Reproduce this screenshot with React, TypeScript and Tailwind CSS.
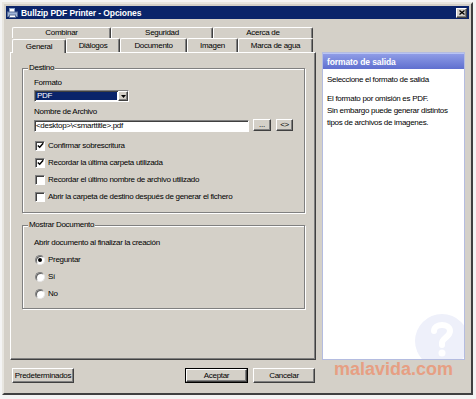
import React from 'react';

const raised =
  'border border-t-white border-l-white border-r-[#404040] border-b-[#404040] shadow-[inset_-1px_-1px_0_#808080]';
const sunken =
  'border border-t-[#808080] border-l-[#808080] border-r-white border-b-white shadow-[inset_1px_1px_0_#404040]';

function Check({ checked }: { checked?: boolean }) {
  return (
    <span className={`w-[10px] h-[10px] bg-white flex items-center justify-center ${sunken}`}>
      {checked && (
        <svg width="7" height="7" viewBox="0 0 7 7">
          <path d="M0.8 3.4 L2.7 5.3 L6.2 1.2" stroke="#000" strokeWidth="1.4" fill="none" />
        </svg>
      )}
    </span>
  );
}

function Radio({ checked }: { checked?: boolean }) {
  return (
    <span className="w-[10px] h-[10px] rounded-full bg-white border border-t-[#808080] border-l-[#808080] border-r-[#e8e8e8] border-b-[#e8e8e8] shadow-[inset_1px_1px_0_#606060] flex items-center justify-center">
      {checked && <span className="w-[4px] h-[4px] rounded-full bg-black" />}
    </span>
  );
}

function Tab({ label, w, h, selected }: { label: string; w: string; h: string; selected?: boolean }) {
  return (
    <div
      className={`${w} ${h} flex items-center justify-center border-t border-l border-t-white border-l-white border-r border-r-[#404040] shadow-[inset_-1px_0_0_#808080] rounded-t-[2px] ${
        selected ? 'relative z-10 -mb-[1px] bg-[#d4d0c8]' : ''
      }`}
    >
      {label}
    </div>
  );
}

function Group({ title, className, children }: { title: string; className: string; children: React.ReactNode }) {
  return (
    <div
      className={`ml-[11px] w-[283px] border border-[#808080] shadow-[inset_1px_1px_0_#fff,1px_1px_0_#fff] ${className}`}
    >
      <div className="-mt-[6px] ml-[5px] px-[1px] w-fit bg-[#d4d0c8] leading-[10px]">{title}</div>
      {children}
    </div>
  );
}

export default function App() {
  return (
    <div className="w-[476px] h-[399px] bg-[#f4f4f4] pl-[2px] pt-[2px] font-['Liberation_Sans',Arial,sans-serif] text-[8px] tracking-[-0.3px] leading-[10px] text-black">
      <div className="w-[471px] h-[393px] bg-[#d4d0c8] border-2 border-t-[#e8e6e0] border-l-[#e8e6e0] border-r-[#404040] border-b-[#404040] p-[2px] flex flex-col">
        {/* Title bar */}
        <div className="h-[13px] bg-[#0a246a] flex items-center pl-[1px] pr-[2px] gap-[3px]">
          <svg width="11" height="10" viewBox="0 0 11 10">
            <rect x="2.5" y="0.5" width="5" height="4" fill="#fff" stroke="#8aa0c8" />
            <rect x="0.5" y="4" width="10" height="4.5" fill="#9fb4d8" stroke="#5a6f98" />
            <rect x="2.5" y="7" width="6" height="2.5" fill="#fff" stroke="#5a6f98" />
          </svg>
          <span className="text-white font-bold text-[8.5px] tracking-[-0.1px]">Bullzip PDF Printer - Opciones</span>
          <div className="flex-1" />
          <div className={`w-[11px] h-[10px] bg-[#d4d0c8] flex items-center justify-center ${raised}`}>
            <svg width="6" height="5" viewBox="0 0 6 5">
              <path d="M0.5 0.5 L5.5 4.5 M5.5 0.5 L0.5 4.5" stroke="#000" strokeWidth="1.3" />
            </svg>
          </div>
        </div>

        <div className="px-[4px] mt-[8px]">
          <div className="flex gap-[6px]">
            {/* Left column: tabs and General page */}
            <div className="w-[306px]">
              <div className="flex pl-[2px]">
                <Tab label="Combinar" w="w-[99px]" h="h-[11px]" />
                <Tab label="Seguridad" w="w-[102px]" h="h-[11px]" />
                <Tab label="Acerca de" w="w-[100px]" h="h-[11px]" />
              </div>
              <div className="flex pl-[2px] items-end">
                <Tab label="General" w="w-[54px]" h="h-[14px]" selected />
                <Tab label="Diálogos" w="w-[54px]" h="h-[14px]" />
                <Tab label="Documento" w="w-[67px]" h="h-[14px]" />
                <Tab label="Imagen" w="w-[51px]" h="h-[14px]" />
                <Tab label="Marca de agua" w="w-[75px]" h="h-[14px]" />
              </div>
              <div className={`h-[308px] pt-[15px] ${raised}`}>
                <Group title="Destino" className="pb-[7px]">
                  <div className="pl-[11px]">
                    <div className="mt-[5px]">Formato</div>
                    <div className={`mt-[2px] w-[95px] h-[12px] bg-white flex ${sunken}`}>
                      <div className="flex-1 m-[1px] bg-[#0a246a] text-white pl-[1px] leading-[8px]">PDF</div>
                      <div className={`w-[10px] bg-[#d4d0c8] flex items-center justify-center ${raised}`}>
                        <svg width="5" height="3" viewBox="0 0 5 3">
                          <path d="M0 0 H5 L2.5 3 Z" fill="#000" />
                        </svg>
                      </div>
                    </div>
                    <div className="mt-[5px]">Nombre de Archivo</div>
                    <div className="mt-[3px] flex items-center h-[12px]">
                      <div className={`w-[215px] h-[12px] bg-white pl-[1px] leading-[10px] ${sunken}`}>
                        {'<desktop>\\<smarttitle>.pdf'}
                      </div>
                      <div className={`ml-[4px] -mt-[2px] w-[18px] h-[12px] flex items-center justify-center leading-[8px] ${raised}`}>
                        ...
                      </div>
                      <div className={`ml-[5px] -mt-[2px] w-[17px] h-[12px] flex items-center justify-center leading-[8px] ${raised}`}>
                        {'<>'}
                      </div>
                    </div>
                    <div className="mt-[5px] flex flex-col">
                      {[
                        ['Confirmar sobrescritura', true],
                        ['Recordar la última carpeta utilizada', true],
                        ['Recordar el último nombre de archivo utilizado', false],
                        ['Abrir la carpeta de destino después de generar el fichero', false],
                      ].map(([label, checked]) => (
                        <div key={label as string} className="h-[17px] flex items-center gap-[3px] pl-[1px]">
                          <Check checked={checked as boolean} />
                          <span>{label as string}</span>
                        </div>
                      ))}
                    </div>
                  </div>
                </Group>

                <Group title="Mostrar Documento" className="mt-[12px] pb-[6px]">
                  <div className="pl-[11px]">
                    <div className="mt-[8px]">Abrir documento al finalizar la creación</div>
                    <div className="mt-[3px] flex flex-col">
                      {['Preguntar', 'Sí', 'No'].map((label, i) => (
                        <div key={label} className="h-[17px] flex items-center gap-[3px] pl-[1px]">
                          <Radio checked={i === 0} />
                          <span>{label}</span>
                        </div>
                      ))}
                    </div>
                  </div>
                </Group>
              </div>
            </div>

            {/* Right column: help panel */}
            <div className="w-[143px] mt-[25px] h-[308px] bg-white border border-[#b4bce0] flex flex-col relative overflow-hidden">
              <div className="h-[16px] bg-gradient-to-b from-[#8f9ce6] to-[#5f6fcf] border-t border-[#b8c4f4] text-white font-bold text-[8.5px] tracking-[-0.1px] flex items-center pl-[4px]">
                formato de salida
              </div>
              <div className="pl-[4px] pt-[5px] leading-[12px]">
                <div>Seleccione el formato de salida</div>
                <div className="mt-[7px]">
                  El formato por omisión es PDF.
                  <br />
                  Sin embargo puede generar distintos
                  <br />
                  tipos de archivos de imagenes.
                </div>
              </div>
              {/* Watermark help icon */}
              <svg className="absolute right-0 bottom-0" width="60" height="48" viewBox="0 0 60 48">
                <circle cx="38" cy="30" r="27" fill="#eef0fa" />
                <path
                  d="M30 20 C30 12 46 12 46 20 C46 26 38 27 38 32 V34"
                  stroke="#fff"
                  strokeWidth="6"
                  fill="none"
                  strokeLinecap="round"
                />
                <circle cx="38" cy="42" r="3.5" fill="#fff" />
              </svg>
            </div>
          </div>

          {/* Bottom buttons */}
          <div className="flex mt-[8px] h-[15px]">
            <div className="w-[306px] flex pl-[2px] pr-[1px]">
              <div className={`w-[62px] h-[15px] flex items-center justify-center ${raised}`}>Predeterminados</div>
              <div className="flex-1" />
              <div className="w-[63px] h-[15px] border border-black flex">
                <div className={`flex-1 flex items-center justify-center ${raised}`}>Aceptar</div>
              </div>
              <div className={`ml-[5px] w-[62px] h-[15px] flex items-center justify-center ${raised}`}>Cancelar</div>
            </div>
            <div className="ml-[6px] w-[143px] -mt-[8px] flex justify-center">
              <span className="text-[18px] leading-[18px] tracking-normal font-bold text-[#e99a7c] opacity-90">
                malavida.com
              </span>
            </div>
          </div>
        </div>
      </div>
    </div>
  );
}
